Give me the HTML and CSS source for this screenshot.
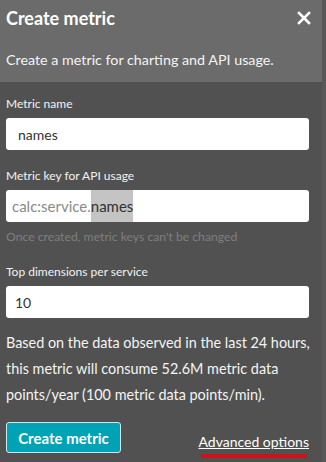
FILE: index.html
```html
<!DOCTYPE html>
<html lang="en">
<head>
  <meta charset="UTF-8" />
  <title>Create metric</title>
  <link rel="stylesheet" href="styles.css">
</head>
<body>
  <div class="panel">
    <div class="header">
      <div class="title-row">
        <h1>Create metric</h1>
        <svg class="close" width="14" height="14" viewBox="0 0 14 14">
          <path d="M2 2 L12 12 M12 2 L2 12" stroke="#fff" stroke-width="2.6" stroke-linecap="square"/>
        </svg>
      </div>
      <p class="subtitle">Create a metric for charting and API usage.</p>
    </div>

    <div class="body">
      <div class="field">
        <label>Metric name</label>
        <div class="input">names</div>
      </div>

      <div class="field">
        <label>Metric key for API usage</label>
        <div class="input key"><span class="prefix">calc:service.</span><span class="sel">names</span></div>
        <div class="hint">Once created, metric keys can't be changed</div>
      </div>

      <div class="field">
        <label>Top dimensions per service</label>
        <div class="input small">10</div>
      </div>

      <p class="info">Based on the data observed in the last 24 hours, this metric will consume 52.6M metric data points/year (100 metric data points/min).</p>

      <div class="actions">
        <button class="button">Create metric</button>
        <a class="advanced">Advanced options<span class="mark"></span></a>
      </div>
    </div>
  </div>
</body>
</html>
```

FILE: styles.css
```css
* { box-sizing: border-box; margin: 0; padding: 0; }
body {
  font-family: Lato, "Open Sans", sans-serif;
  background-color: #515151;
  color: #f2f2f2;
  width: 326px;
  height: 462px;
  overflow: hidden;
}
.panel {
  height: 462px;
  border-right: 4px solid #585858;
}
.header {
  background-color: #6b6b6b;
  height: 82px;
  padding: 4px 6px 0 6px;
}
.title-row {
  display: flex;
  justify-content: space-between;
  align-items: flex-start;
}
h1 {
  font-size: 18px;
  font-weight: 700;
  color: #fff;
  line-height: 28px;
}
.close {
  margin-right: 5px;
  margin-top: 7px;
}
.subtitle {
  font-size: 14.3px;
  margin-top: 19px;
  color: #f4f4f4;
}
.body {
  padding: 13px 13px 0 6px;
}
.field label {
  display: block;
  font-size: 12px;
  color: #f2f2f2;
  line-height: 18px;
}
.input {
  background-color: #fff;
  color: #333;
  height: 32px;
  border-radius: 3px;
  margin-top: 5px;
  font-size: 14px;
  padding: 0 12px;
  display: flex;
  align-items: center;
  margin-bottom: 17px;
}
.input.small { padding-left: 9px; font-size: 14px; margin-bottom: 0; }
.input.key {
  padding-left: 6px;
  align-items: stretch;
  margin-bottom: 7px;
  font-size: 15px;
}
.prefix {
  color: #8a8a8a;
  display: flex;
  align-items: center;
}
.sel {
  background-color: #c4c4c4;
  color: #333;
  display: flex;
  align-items: center;
}
.hint {
  font-size: 12.2px;
  color: #7f7f7f;
  margin-bottom: 19px;
}
.info {
  font-size: 14.4px;
  line-height: 26px;
  margin-top: 12px;
  margin-right: -10px;
  color: #f4f4f4;
}
.actions {
  display: flex;
  justify-content: space-between;
  align-items: flex-end;
  margin-top: 14px;
}
.button {
  background-color: #00a2b5;
  color: #fff;
  border: 1px solid #d0e8ea;
  border-radius: 3px;
  font-family: inherit;
  font-size: 15px;
  font-weight: 700;
  width: 115px;
  height: 31px;
}
.advanced {
  position: relative;
  font-size: 14px;
  color: #fff;
  text-decoration: underline;
  margin-bottom: 3px;
}
.mark {
  position: absolute;
  left: 3px;
  right: 2px;
  bottom: -8px;
  height: 4px;
  background-color: #d0111a;
  border-radius: 2px;
}
```
